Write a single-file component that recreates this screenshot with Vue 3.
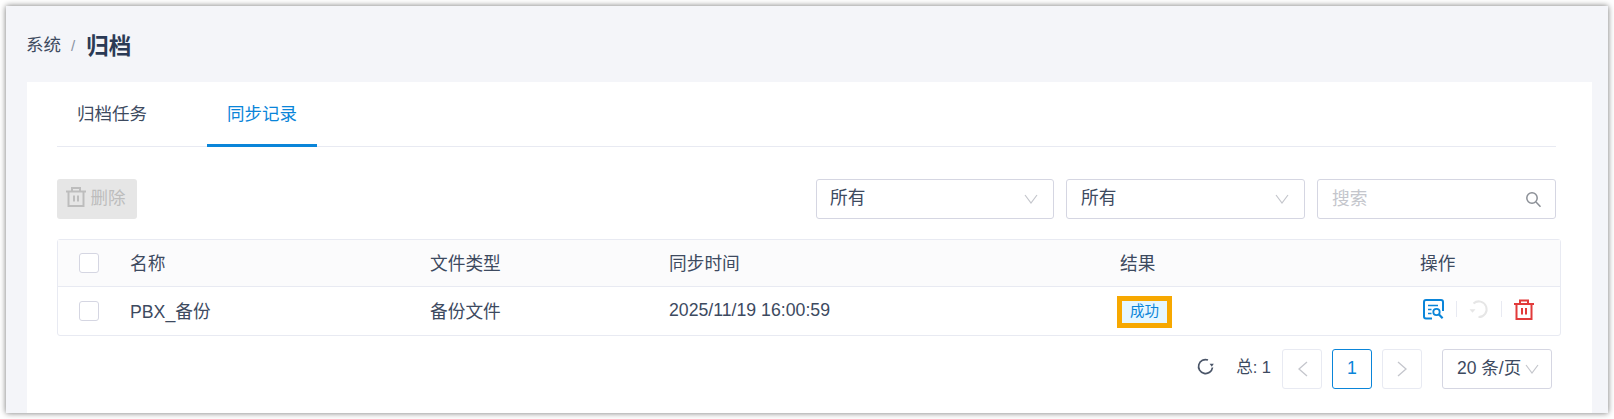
<template>
  <div class="frame">
    <div class="crumbs">
      <span class="crumb">系统</span>
      <span class="sep">/</span>
      <span class="current">归档</span>
    </div>

    <div class="card">
      <div class="tabs">
        <div class="tab">归档任务</div>
        <div class="tab active">同步记录</div>
      </div>

      <div class="toolbar">
        <button class="del-btn" disabled>
          <svg width="22" height="22" viewBox="0 0 22 22" fill="none" stroke="#bdbdbd" stroke-width="2">
            <path d="M1 5.5h20M7 5.5V2h8v3.500M3.500 5.500V20h15V5.500M9 9.500v6M13 9.500v6" />
          </svg>
          <span>删除</span>
        </button>
        <div class="filters">
          <div v-for="f in filters" :key="f" class="select">
            <span>{{ f }}</span>
            <svg class="chev" width="14" height="10" viewBox="0 0 14 10" fill="none" stroke="#c4c6cc" stroke-width="1.2">
              <path d="M1 1l6 8 6-8" />
            </svg>
          </div>
          <div class="search">
            <span>搜索</span>
            <svg width="17" height="17" viewBox="0 0 17 17" fill="none" stroke="#8b8f96" stroke-width="1.5">
              <circle cx="7" cy="7" r="5.2" />
              <path d="M11 11l4.5 4.8" />
            </svg>
          </div>
        </div>
      </div>

      <div class="table">
        <div class="row head">
          <div class="cell"><span class="check"></span></div>
          <div class="cell text">名称</div>
          <div class="cell text">文件类型</div>
          <div class="cell text">同步时间</div>
          <div class="cell text">结果</div>
          <div class="cell text">操作</div>
        </div>
        <div class="row body-row">
          <div class="cell"><span class="check"></span></div>
          <div class="cell text">PBX_备份</div>
          <div class="cell text">备份文件</div>
          <div class="cell text">2025/11/19 16:00:59</div>
          <div class="cell"><span class="tag">成功</span></div>
          <div class="cell actions">
            <svg width="21" height="21" viewBox="0 0 21 21" fill="none" stroke="#0a85d9" stroke-width="2">
              <path d="M9 19.500H3a2 2 0 0 1-2-2V3a2 2 0 0 1 2-2h15a2 2 0 0 1 2 2v9" />
              <path d="M5 6.500h10M5 10.500h3.500M5 14.500h3.500" stroke-width="1.7" />
              <circle cx="13.500" cy="13" r="3.200" stroke-width="1.8" />
              <path d="M16 15.500l3.600 3.800" stroke-width="2.2" />
            </svg>
            <i class="div"></i>
            <svg width="20" height="20" viewBox="0 0 20 20" fill="none" stroke="#e6e6e6" stroke-width="2">
              <path d="M4.500 4.500A7.800 7.800 0 1 1 9.500 18" />
              <path d="M0.500 10.200h6l-3 3.600z" fill="#e6e6e6" stroke="none" />
            </svg>
            <i class="div"></i>
            <svg width="20" height="21" viewBox="0 0 20 21" fill="none" stroke="#e23b3b" stroke-width="2">
              <path d="M0 5h20M6 5V1.500h8V5M2.500 5v15h15V5M8 9v6.500M12 9v6.500" />
            </svg>
          </div>
        </div>
      </div>

      <div class="pager">
        <svg class="refresh" width="17" height="17" viewBox="0 0 17 17" fill="none" stroke="#4a5568" stroke-width="1.700">
          <path d="M11 2A7 7 0 1 0 15.500 9.500" />
          <path d="M12.600 5.800h4.200l-2 3z" fill="#4a5568" stroke="none" />
        </svg>
        <span class="total">总: 1</span>
        <div class="pg disabled">
          <svg width="11" height="16" viewBox="0 0 11 16" fill="none" stroke="#c4c6cc" stroke-width="1.300"><path d="M10 1L2 8l8 7" /></svg>
        </div>
        <div class="pg current-page"><span>1</span></div>
        <div class="pg disabled">
          <svg width="11" height="16" viewBox="0 0 11 16" fill="none" stroke="#c4c6cc" stroke-width="1.300"><path d="M1 1l8 7-8 7" /></svg>
        </div>
        <div class="size">
          <span>20 条/页</span>
          <svg width="14" height="10" viewBox="0 0 14 10" fill="none" stroke="#c4c6cc" stroke-width="1.200"><path d="M1 1l6 8 6-8" /></svg>
        </div>
      </div>
    </div>
  </div>
</template>

<script setup>
const filters = ['所有', '所有']
</script>

<style>
html,
body {
  background: #fff;
  overflow: hidden;
}
</style>

<style scoped>
.frame {
  box-sizing: border-box;
  width: 1602px;
  height: 407px;
  margin: 6px;
  background: #f4f5f9;
  box-shadow: 0 0 6px rgba(0, 0, 0, 0.55);
  overflow: hidden;
  color: #3d4a5f;
  font-family: "Liberation Sans", "Noto Sans CJK SC", sans-serif;
  font-size: 17.7px;
}

.crumbs {
  display: flex;
  align-items: center;
  height: 76px;
  padding: 0 0 1px 20px;
  box-sizing: border-box;
}
.crumb {
  font-size: 17.500px;
}
.sep {
  margin: 4px 11px 0 10px;
  color: #8a93a3;
  font-size: 15px;
}
.current {
  font-size: 22.500px;
  font-weight: 700;
  color: #2b3a55;
}

.card {
  height: 331px;
  margin: 0 16px 0 21px;
  padding: 0 36px 0 30px;
  background: #fff;
}

.tabs {
  display: flex;
  height: 65px;
  border-bottom: 1px solid #e8eaf2;
  box-sizing: border-box;
}
.tab {
  box-sizing: border-box;
  width: 110px;
  height: 65px;
  margin-right: 20px;
  padding-top: 19px;
  text-align: center;
  font-size: 17.500px;
  line-height: 26px;
  border-bottom: 3px solid transparent;
}
.tab:first-child {
  width: 110px;
  margin-right: 40px;
}
.tab.active {
  color: #0a85d9;
  border-bottom-color: #0a85d9;
}

.toolbar {
  display: flex;
  justify-content: space-between;
  margin-top: 32px;
  height: 40px;
}
.del-btn {
  display: flex;
  align-items: center;
  justify-content: center;
  gap: 4px;
  width: 80px;
  height: 40px;
  padding: 0 4px 5px 0;
  border: none;
  border-radius: 3px;
  background: #e6e6e6;
  color: #bdbdbd;
  font: inherit;
  font-size: 17.500px;
}

.filters {
  display: flex;
  gap: 12px;
}
.select span,
.size span {
  padding-bottom: 6px;
}
.search span {
  padding-bottom: 5px;
}
.pg span {
  padding-bottom: 2px;
}
.select,
.search,
.size {
  box-sizing: border-box;
  display: flex;
  align-items: center;
  justify-content: space-between;
  height: 40px;
  background: #fff;
  border: 1px solid #d5d6e2;
  border-radius: 3px;
}
.select {
  width: 238px;
  padding: 0 15px 0 13px;
}
.select:nth-child(2) {
  width: 239px;
  padding-left: 14px;
}
.search {
  width: 239px;
  padding: 0 13px 0 14px;
  color: #c4c6cc;
}

.table {
  width: 1504px;
  margin-top: 20px;
  border: 1px solid #e8eaf2;
  border-radius: 3px;
  box-sizing: border-box;
}
.row {
  display: grid;
  grid-template-columns: 72px 300px 239px 451px 300px 1fr;
  align-items: center;
}
.head {
  height: 46px;
  background: #fbfbfc;
  border-bottom: 1px solid #e8eaf2;
}
.body-row {
  height: 48px;
}
.cell {
  display: flex;
  align-items: center;
  white-space: nowrap;
}
.head .cell.text {
  padding-bottom: 3px;
}
.body-row .cell.text {
  padding-bottom: 2px;
}
.check {
  box-sizing: border-box;
  display: block;
  width: 20px;
  height: 20px;
  margin-left: 21px;
  background: #fff;
  border: 1px solid #d5d6e2;
  border-radius: 3px;
}
.tag {
  box-sizing: border-box;
  display: block;
  width: 55px;
  height: 32px;
  margin: 1px 0 0 -3px;
  border: 5px solid #f7a800;
  background: #e6f7ff;
  color: #0a85d9;
  font-size: 14.500px;
  line-height: 20px;
  text-align: center;
}
.actions {
  gap: 0;
  margin-left: 3px;
  padding-bottom: 4px;
}
.div {
  display: block;
  width: 1px;
  height: 16px;
  margin: 0 12px;
  background: #e8eaf2;
}

.pager {
  display: flex;
  align-items: center;
  justify-content: flex-end;
  width: 1495px;
  margin-top: 13px;
}
.refresh {
  margin: 0 22px 5px 0;
}
.total {
  margin: 0 11px 6px 0;
  font-size: 16.500px;
}
.pg {
  box-sizing: border-box;
  display: flex;
  align-items: center;
  justify-content: center;
  width: 40px;
  height: 40px;
  margin-right: 10px;
  border: 1px solid #e8eaf2;
  border-radius: 3px;
}
.current-page {
  border-color: #0a85d9;
  color: #0a85d9;
}
.size {
  width: 110px;
  margin-left: 10px;
  padding: 0 12px 0 14px;
  font-size: 17.500px;
  white-space: nowrap;
}
</style>
